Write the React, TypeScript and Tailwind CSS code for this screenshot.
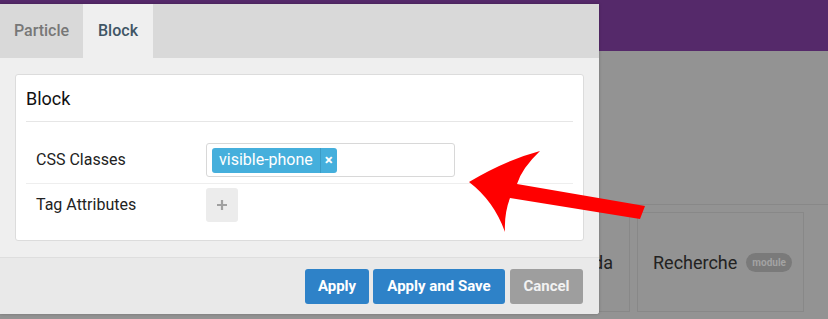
import React from 'react';

function Arrow() {
  return (
    <svg className="pointer-events-none absolute left-0 top-0" width={828} height={319} viewBox="0 0 828 319">
      <path
        d="M469,182 Q506,160 540,151 Q522,168 517,184 L645,206 L640,219 L510,198 Q504,214 505,232 Q494,201 469,182 Z"
        fill="#ff0000"
      />
    </svg>
  );
}

function Background() {
  return (
    <div className="flex h-full flex-col">
      <div className="h-[51px] bg-[#55296a]" />
      <div className="flex flex-1 flex-col bg-[#939393]">
        <div className="h-[154px] border-b border-[#888]" />
        <div className="flex gap-[7px] pl-[470px] pt-[7px]">
          <div className="flex h-[100px] w-[160px] items-center justify-end border border-[#888] pr-[16px] text-[18px] text-[#222]">
            Agenda
          </div>
          <div className="flex h-[100px] w-[167px] items-center gap-[9px] border border-[#888] pl-[15px] text-[18px] text-[#222]">
            Recherche
            <span className="rounded-full bg-[#7a7a7a] px-[6px] py-[2px] text-[10px] font-bold text-[#a3a3a3]">module</span>
          </div>
        </div>
      </div>
    </div>
  );
}

export default function App() {
  return (
    <div className="relative h-[319px] w-[828px] overflow-hidden bg-[#939393] font-['Roboto',sans-serif]">
      <Background />

      <div className="absolute left-0 top-[4px] flex h-[310px] w-[599px] flex-col rounded-br-[3px] bg-[#efefef] shadow-[0_0_3px_rgba(0,0,0,0.25)]">
        <div className="flex h-[54px] bg-[#d9d9d9] text-[16px] font-medium">
          <div className="flex w-[83px] items-center justify-center text-[#777]">Particle</div>
          <div className="flex w-[70px] items-center justify-center bg-[#efefef] text-[#3f5565]">Block</div>
        </div>

        <div className="flex-1 px-[15px] pt-[16px]">
          <div className="h-[167px] rounded-[3px] border border-[#dcdcdc] bg-white px-[10px]">
            <div className="flex h-[47px] items-center border-b border-[#e6e6e6] pt-[1px] text-[18px] text-[#111]">
              Block
            </div>
            <div className="flex h-[62px] items-end border-b border-[#eeeeee] pb-[6px] text-[16px] text-[#222]">
              <div className="flex h-[34px] w-[180px] items-center pl-[10px]">CSS Classes</div>
              <div className="flex h-[34px] w-[249px] items-center rounded-[3px] border border-[#d8d8d8] px-[5px]">
                <div className="flex h-[25px] items-center rounded-[3px] bg-[#45afdc] text-white">
                  <span className="px-[7px] text-[16px]">visible-phone</span>
                  <span className="flex h-full w-[17px] items-center justify-center border-l border-[#3a9cc6] text-[15px] font-bold">
                    ×
                  </span>
                </div>
              </div>
            </div>
            <div className="flex items-center pt-[4px] text-[16px] text-[#222]">
              <div className="flex h-[34px] w-[180px] items-center pl-[10px]">Tag Attributes</div>
              <div className="flex h-[34px] w-[32px] items-center justify-center rounded-[3px] bg-[#ececec] text-[#999]">
                <svg width="12" height="12" viewBox="0 0 12 12">
                  <path d="M6 1v10M1 6h10" stroke="#a0a0a0" strokeWidth="2.2" />
                </svg>
              </div>
            </div>
          </div>
        </div>

        <div className="flex h-[57px] items-start justify-end gap-[4px] rounded-br-[3px] border-t border-[#dedede] bg-[#e9e9e9] pr-[16px] pt-[11px]">
          <button className="h-[35px] w-[64px] rounded-[3px] bg-[#2e82c8] text-[15px] font-bold text-white">Apply</button>
          <button className="h-[35px] w-[132px] rounded-[3px] bg-[#2e82c8] text-[15px] font-bold text-white">
            Apply and Save
          </button>
          <button className="ml-[1px] h-[35px] w-[73px] rounded-[3px] bg-[#9e9e9e] text-[15px] font-bold text-[#f2f2f2]">
            Cancel
          </button>
        </div>
      </div>

      <Arrow />
    </div>
  );
}
